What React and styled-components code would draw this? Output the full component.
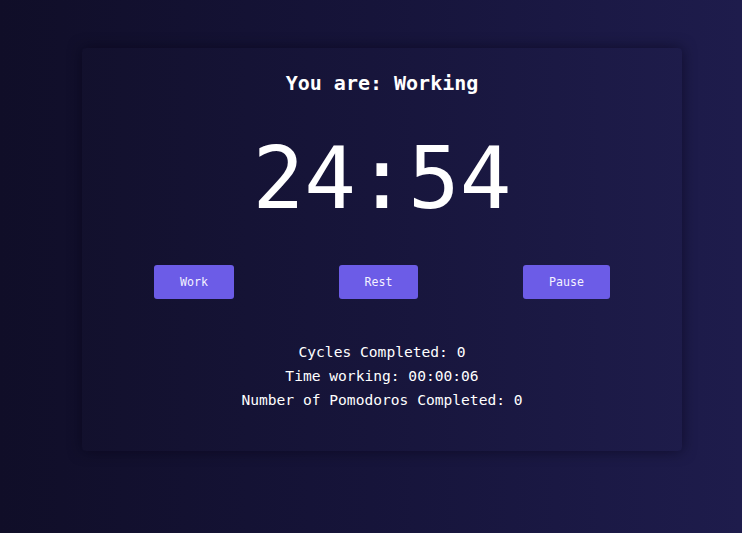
import React from "react";
import styled, { createGlobalStyle } from "styled-components";

const GlobalStyle = createGlobalStyle`
  html, body {
    margin: 0;
    padding: 0;
  }
  body {
    min-height: 100vh;
    background: linear-gradient(90deg, #100e28 0%, #16143a 50%, #1e1c4c 100%);
    font-family: "DejaVu Sans Mono", "Liberation Mono", monospace;
    color: #ffffff;
  }
`;

const Page = styled.div`
  padding-top: 48px;
  padding-left: 82px;
`;

const Card = styled.div`
  width: 600px;
  height: 403px;
  box-sizing: border-box;
  padding-top: 23px;
  border-radius: 4px;
  background: rgba(255, 255, 255, 0.008);
  box-shadow: 0 0 14px rgba(5, 4, 20, 0.55);
  display: flex;
  flex-direction: column;
  align-items: center;
`;

const Status = styled.h2`
  margin: 0;
  font-size: 20px;
  line-height: 24px;
  font-weight: bold;
`;

const Timer = styled.div`
  margin-top: 33px;
  font-size: 86px;
  line-height: 100px;
  font-weight: normal;
`;

const ButtonRow = styled.div`
  align-self: stretch;
  margin-top: 37px;
  padding: 0 72px;
  display: flex;
  justify-content: space-between;
`;

const Button = styled.button`
  height: 34px;
  padding: 0 26px;
  border: none;
  border-radius: 3px;
  background: #6c5ce7;
  color: #f4f2ff;
  font-family: "DejaVu Sans Mono", "Liberation Mono", monospace;
  font-size: 11.6px;
  cursor: pointer;
`;

const Stats = styled.div`
  margin-top: 41px;
  display: flex;
  flex-direction: column;
  align-items: center;
`;

const StatLine = styled.p`
  margin: 0;
  font-size: 14.6px;
  line-height: 24px;
`;

export default function App() {
  return (
    <>
      <GlobalStyle />
      <Page>
        <Card>
          <Status>You are: Working</Status>
          <Timer>24:54</Timer>
          <ButtonRow>
            <Button type="button">Work</Button>
            <Button type="button">Rest</Button>
            <Button type="button">Pause</Button>
          </ButtonRow>
          <Stats>
            <StatLine>Cycles Completed: 0</StatLine>
            <StatLine>Time working: 00:00:06</StatLine>
            <StatLine>Number of Pomodoros Completed: 0</StatLine>
          </Stats>
        </Card>
      </Page>
    </>
  );
}
